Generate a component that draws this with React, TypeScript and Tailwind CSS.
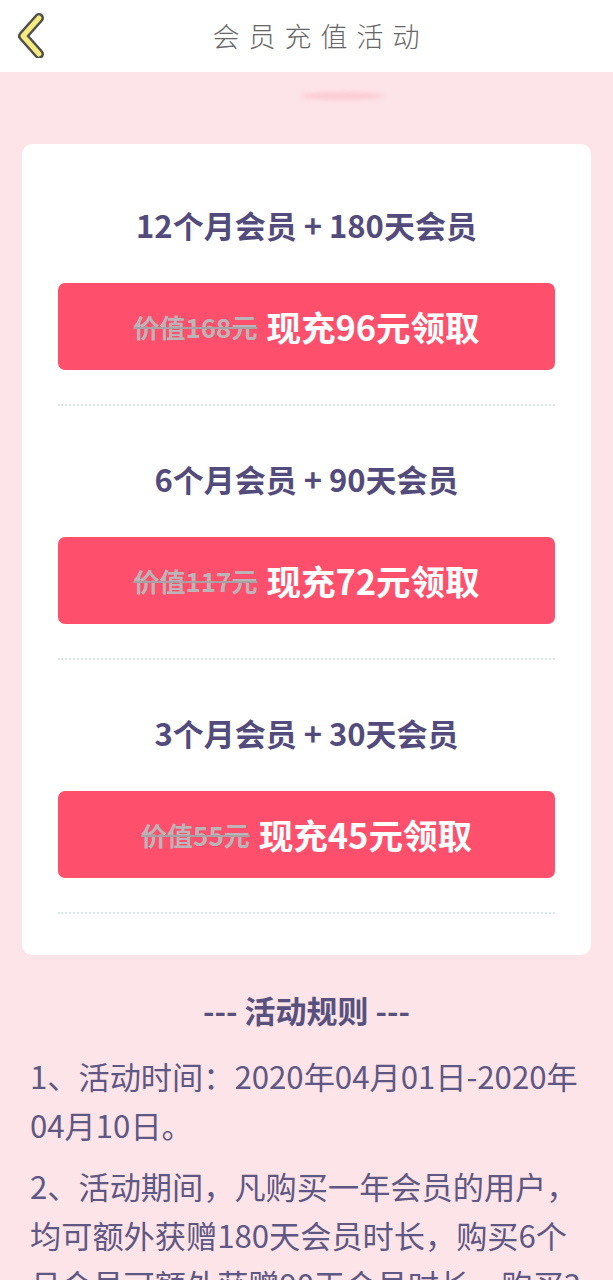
import React from 'react';

const packs = [
  { title: '12个月会员 + 180天会员', worth: '价值168元', now: '现充96元领取' },
  { title: '6个月会员 + 90天会员', worth: '价值117元', now: '现充72元领取' },
  { title: '3个月会员 + 30天会员', worth: '价值55元', now: '现充45元领取' },
];

const rules = [
  '1、活动时间：2020年04月01日-2020年04月10日。',
  '2、活动期间，凡购买一年会员的用户，均可额外获赠180天会员时长，购买6个月会员可额外获赠90天会员时长，购买3个月会员可额外获赠30天会员时长。',
  '3、赠送的会员时长将在充值成功后自动发放到账户中。',
];

function BackIcon() {
  return (
    <svg width="34" height="46" viewBox="0 0 34 46">
      <polyline
        points="25,6 9,24 25,42"
        fill="none"
        stroke="#4f4f4f"
        strokeWidth="10"
        strokeLinecap="round"
        strokeLinejoin="round"
      />
      <polyline
        points="25,6 9,24 25,42"
        fill="none"
        stroke="#f7ea7e"
        strokeWidth="5"
        strokeLinecap="round"
        strokeLinejoin="round"
      />
    </svg>
  );
}

export default function App() {
  return (
    <div
      className="min-h-[1280px] w-full bg-[#fde4e8]"
      style={{ fontFamily: '"Noto Sans CJK SC", "Noto Sans", sans-serif' }}
    >
      {/* header */}
      <div className="relative flex h-[72px] items-center justify-center bg-white">
        <div className="absolute left-[14px] top-[12px]">
          <BackIcon />
        </div>
        <h1 className="pl-[28px] text-[27px] font-light tracking-[9px] text-[#666666]">会员充值活动</h1>
      </div>

      {/* decoration */}
      <div className="flex h-[72px] justify-start pl-[300px] pt-[20px]">
        <div className="h-[8px] w-[84px] rounded-[50%] bg-[#fbccd3] blur-[2px]" />
      </div>

      {/* card */}
      <div className="mx-[22px] rounded-[10px] bg-white px-[36px] pb-[41px] pt-[8px]">
        {packs.map((p) => (
          <div key={p.title} className="pt-[55px]">
            <div className="text-center text-[31px] font-bold leading-[36px] text-[#524b7c]">{p.title}</div>
            <button className="mt-[40px] flex h-[87px] w-full items-center justify-center gap-[9px] rounded-[7px] bg-[#fe4f6d]">
              <span className="text-[26px] font-bold text-[#bcb4b7] line-through decoration-[#a9a2a5] decoration-2">
                {p.worth}
              </span>
              <span className="text-[34.5px] font-bold text-white">{p.now}</span>
            </button>
            <div className="mt-[34px] border-t-2 border-dotted border-[#d8e6e8]" />
          </div>
        ))}
      </div>

      {/* rules */}
      <div className="px-[30px] pb-[40px]">
        <div className="mt-[35px] text-center text-[31px] font-bold leading-[40px] text-[#58517f]">--- 活动规则 ---</div>
        <div className="mt-[21px] flex flex-col gap-[12px]">
          {rules.map((r) => (
            <p key={r} className="text-[31.2px] leading-[49px] text-[#5f5784]">
              {r}
            </p>
          ))}
        </div>
      </div>
    </div>
  );
}
